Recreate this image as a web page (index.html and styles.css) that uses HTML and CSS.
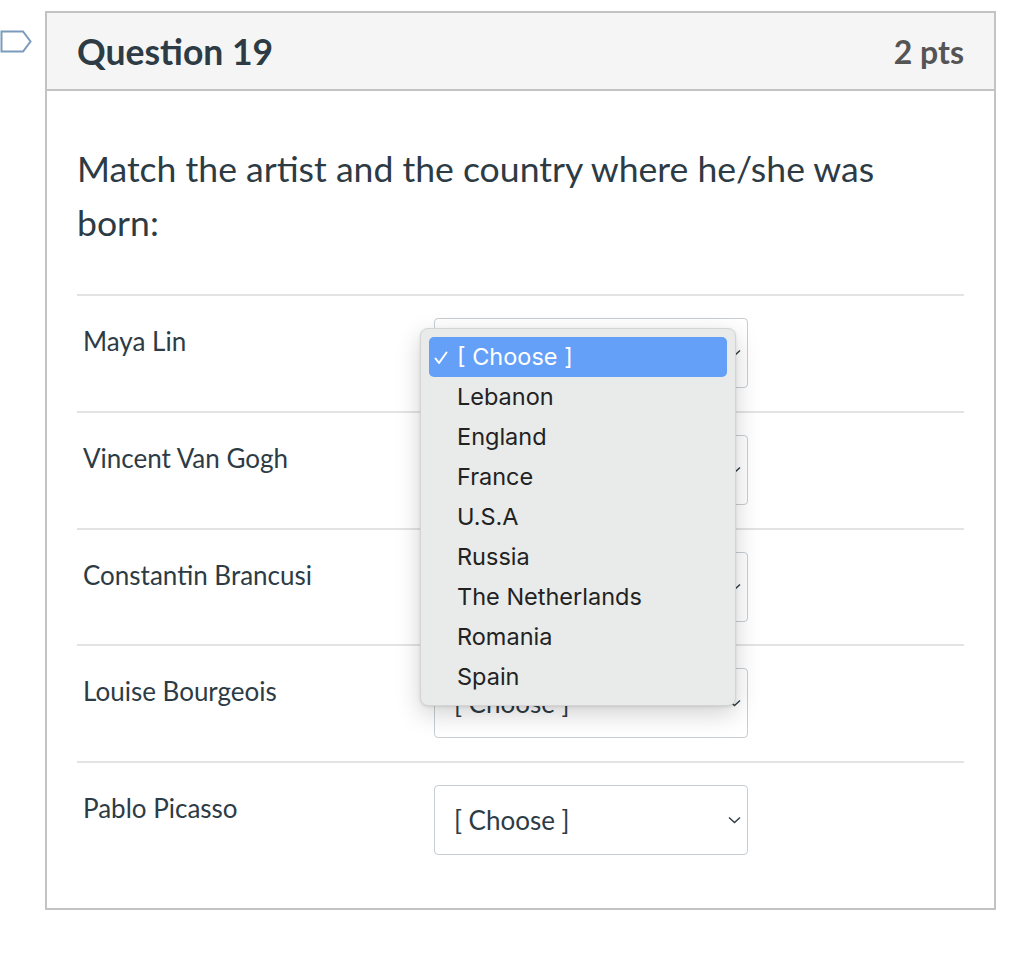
FILE: index.html
```html
<!DOCTYPE html>
<html>
<head>
<meta charset="utf-8">
<link rel="stylesheet" href="styles.css">
</head>
<body>
<div class="page">
  <div class="flag">
    <svg width="33" height="24" viewBox="0 0 33 24"><path d="M1.5 1.5 H23 L30.5 11.5 L23 21.5 H1.5 Z" fill="none" stroke="#7a9bbd" stroke-width="2"/></svg>
  </div>
  <div class="card">
    <div class="card-header">
      <h2 class="title">Question 19</h2>
      <span class="pts">2 pts</span>
    </div>
    <div class="card-body">
      <p class="prompt">Match the artist and the country where he/she was born:</p>
      <div class="rows">
        <div class="row">
          <div class="label">Maya Lin</div>
          <div class="select-wrap">
            <div class="select"><span>[ Choose ]</span><svg class="chev" width="13" height="8" viewBox="0 0 13 8"><path d="M1 1.5 L6.5 6.5 L12 1.5" fill="none" stroke="#2d3b45" stroke-width="1.4"/></svg></div>
            <div class="menu">
              <div class="opt sel"><svg class="check" width="14" height="14" viewBox="0 0 14 14"><path d="M1.5 7.5 L5 12 L12.5 1.5" fill="none" stroke="#fff" stroke-width="2" stroke-linecap="round" stroke-linejoin="round"/></svg>[ Choose ]</div>
              <div class="opt">Lebanon</div>
              <div class="opt">England</div>
              <div class="opt">France</div>
              <div class="opt">U.S.A</div>
              <div class="opt">Russia</div>
              <div class="opt">The Netherlands</div>
              <div class="opt">Romania</div>
              <div class="opt">Spain</div>
            </div>
          </div>
        </div>
        <div class="row">
          <div class="label">Vincent Van Gogh</div>
          <div class="select-wrap"><div class="select"><span>[ Choose ]</span><svg class="chev" width="13" height="8" viewBox="0 0 13 8"><path d="M1 1.5 L6.5 6.5 L12 1.5" fill="none" stroke="#2d3b45" stroke-width="1.4"/></svg></div></div>
        </div>
        <div class="row">
          <div class="label">Constantin Brancusi</div>
          <div class="select-wrap"><div class="select"><span>[ Choose ]</span><svg class="chev" width="13" height="8" viewBox="0 0 13 8"><path d="M1 1.5 L6.5 6.5 L12 1.5" fill="none" stroke="#2d3b45" stroke-width="1.4"/></svg></div></div>
        </div>
        <div class="row">
          <div class="label">Louise Bourgeois</div>
          <div class="select-wrap"><div class="select"><span>[ Choose ]</span><svg class="chev" width="13" height="8" viewBox="0 0 13 8"><path d="M1 1.5 L6.5 6.5 L12 1.5" fill="none" stroke="#2d3b45" stroke-width="1.4"/></svg></div></div>
        </div>
        <div class="row">
          <div class="label">Pablo Picasso</div>
          <div class="select-wrap"><div class="select"><span>[ Choose ]</span><svg class="chev" width="13" height="8" viewBox="0 0 13 8"><path d="M1 1.5 L6.5 6.5 L12 1.5" fill="none" stroke="#2d3b45" stroke-width="1.4"/></svg></div></div>
        </div>
      </div>
    </div>
  </div>
</div>
</body>
</html>
```
FILE: styles.css
```css
* { box-sizing: border-box; }
html, body { margin: 0; padding: 0; background: #fff; }
body { font-family: Lato, "Liberation Sans", sans-serif; color: #2d3b45; }

.page {
  display: flex;
  align-items: flex-start;
  padding-top: 11px;
}

.flag {
  width: 45px;
  padding-top: 19px;
  flex: none;
}
.flag svg { display: block; }

.card {
  width: 951px;
  border: 2px solid #c3c3c3;
  background: #fff;
}

.card-header {
  display: flex;
  justify-content: space-between;
  align-items: center;
  height: 78px;
  padding: 0 30px;
  background: #f5f5f5;
  border-bottom: 2px solid #c3c3c3;
}
.title {
  margin: 0;
  font-size: 35.5px;
  font-weight: 700;
  color: #2d3b45;
}
.pts {
  font-size: 32px;
  font-weight: 700;
  color: #555;
}

.card-body {
  padding: 51px 30px 32px 30px;
}
.prompt {
  margin: 0 0 44px 0;
  font-size: 35.6px;
  line-height: 54px;
  padding-right: 40px;
}

.rows { border-top: 2px solid #e3e3e3; }
.row {
  display: flex;
  align-items: flex-start;
  height: 116.75px;
  padding: 22px 0 0 6px;
  border-bottom: 2px solid #e3e3e3;
}
.row:last-child { border-bottom: none; height: 113px; }
.label {
  width: 351px;
  font-size: 26px;
  line-height: 34px;
  padding-top: 6px;
  flex: none;
}
.select-wrap { position: relative; }
.select {
  width: 314px;
  height: 70px;
  border: 1px solid #c7cdd1;
  border-radius: 4px;
  background: #fff;
  display: flex;
  align-items: center;
  justify-content: space-between;
  padding: 0 6px 0 19px;
  font-size: 26px;
}

.menu {
  position: absolute;
  left: -14px;
  top: 10px;
  width: 316px;
  padding: 8px;
  background: #e9eaea;
  border: 1px solid #d4d4d4;
  border-radius: 8px;
  box-shadow: 0 8px 24px rgba(0,0,0,0.18), 0 1px 3px rgba(0,0,0,0.1);
  font-family: Inter, "Liberation Sans", sans-serif;
  font-size: 23.5px;
  color: #222;
  z-index: 2;
}
.opt {
  height: 40px;
  line-height: 40px;
  padding-left: 28px;
  position: relative;
  border-radius: 5px;
}
.opt.sel {
  background: #64a0f8;
  color: #fff;
}
.check {
  position: absolute;
  left: 5px;
  top: 14px;
}
```
